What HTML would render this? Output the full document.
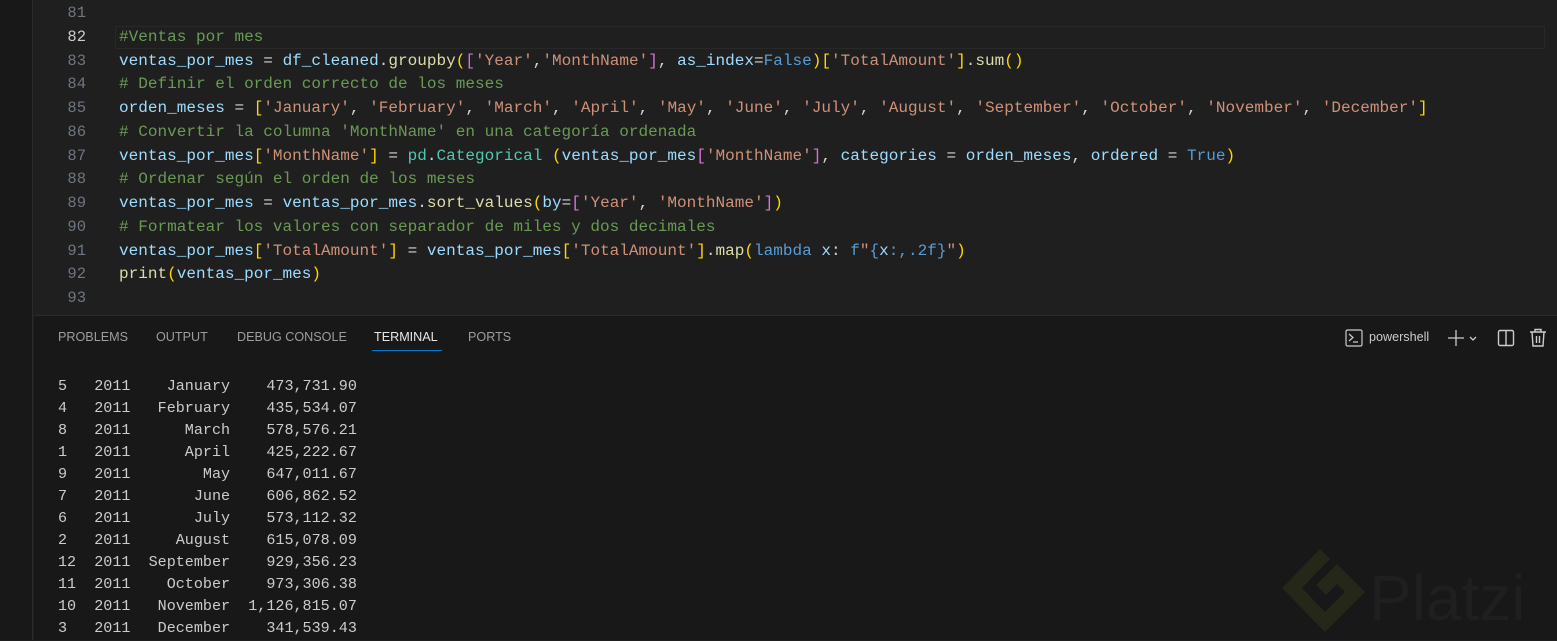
<!DOCTYPE html>
<html><head><meta charset="utf-8"><style>
*{margin:0;padding:0;box-sizing:border-box}
body{width:1557px;height:640px;overflow:hidden;background:#1f1f1f;position:relative;font-family:"Liberation Mono",monospace}
#side{position:absolute;left:0;top:0;width:33px;height:640px;background:#181818;border-right:1px solid #2b2b2b}
#ed{position:absolute;left:34px;top:0;right:0;height:315px;background:#1f1f1f}
.ln{position:absolute;left:0;width:52px;text-align:right;color:#6e7681;font-size:15.5px;height:24px;line-height:24px}
.cl{position:absolute;left:119px;font-size:16.05px;white-space:pre;color:#d4d4d4;height:24px;line-height:24px}
.v{color:#9cdcfe}.s{color:#ce9178}.c{color:#6a9955}.f{color:#dcdcaa}.y{color:#ffd700}.p{color:#da70d6}.b{color:#179fff}.k{color:#569cd6}.t{color:#4ec9b0}
#cur{position:absolute;left:81px;top:26px;width:1430px;height:23px;border:1px solid #282828}
#panel{position:absolute;left:34px;top:315px;right:0;bottom:0;background:#181818;border-top:1px solid #2b2b2b}
.tab{position:absolute;top:14px;font-family:"Liberation Sans",sans-serif;font-size:12.6px;color:#9d9d9d}
.tr{position:absolute;left:24px;font-size:15.1px;white-space:pre;color:#cccccc;line-height:22px}
</style></head><body>
<div id="side"></div>
<div id="ed">
<div id="cur"></div>
<div class="ln" style="top:1px">81</div>
<div class="ln" style="top:25px;color:#cccccc">82</div>
<div class="ln" style="top:49px">83</div>
<div class="ln" style="top:72px">84</div>
<div class="ln" style="top:96px">85</div>
<div class="ln" style="top:120px">86</div>
<div class="ln" style="top:144px">87</div>
<div class="ln" style="top:167px">88</div>
<div class="ln" style="top:191px">89</div>
<div class="ln" style="top:215px">90</div>
<div class="ln" style="top:239px">91</div>
<div class="ln" style="top:262px">92</div>
<div class="ln" style="top:286px">93</div>
</div>
<div style="position:absolute;left:0;top:0">
<div class="cl" style="top:25px"><span class="c">#Ventas por mes</span></div>
<div class="cl" style="top:49px"><span class="v">ventas_por_mes</span> = <span class="v">df_cleaned</span>.<span class="f">groupby</span><span class="y">(</span><span class="p">[</span><span class="s">'Year'</span>,<span class="s">'MonthName'</span><span class="p">]</span>, <span class="v">as_index</span>=<span class="k">False</span><span class="y">)</span><span class="y">[</span><span class="s">'TotalAmount'</span><span class="y">]</span>.<span class="f">sum</span><span class="y">()</span></div>
<div class="cl" style="top:72px"><span class="c"># Definir el orden correcto de los meses</span></div>
<div class="cl" style="top:96px"><span class="v">orden_meses</span> = <span class="y">[</span><span class="s">'January'</span>, <span class="s">'February'</span>, <span class="s">'March'</span>, <span class="s">'April'</span>, <span class="s">'May'</span>, <span class="s">'June'</span>, <span class="s">'July'</span>, <span class="s">'August'</span>, <span class="s">'September'</span>, <span class="s">'October'</span>, <span class="s">'November'</span>, <span class="s">'December'</span><span class="y">]</span></div>
<div class="cl" style="top:120px"><span class="c"># Convertir la columna 'MonthName' en una categoría ordenada</span></div>
<div class="cl" style="top:144px"><span class="v">ventas_por_mes</span><span class="y">[</span><span class="s">'MonthName'</span><span class="y">]</span> = <span class="t">pd</span>.<span class="t">Categorical</span> <span class="y">(</span><span class="v">ventas_por_mes</span><span class="p">[</span><span class="s">'MonthName'</span><span class="p">]</span>, <span class="v">categories</span> = <span class="v">orden_meses</span>, <span class="v">ordered</span> = <span class="k">True</span><span class="y">)</span></div>
<div class="cl" style="top:167px"><span class="c"># Ordenar según el orden de los meses</span></div>
<div class="cl" style="top:191px"><span class="v">ventas_por_mes</span> = <span class="v">ventas_por_mes</span>.<span class="f">sort_values</span><span class="y">(</span><span class="v">by</span>=<span class="p">[</span><span class="s">'Year'</span>, <span class="s">'MonthName'</span><span class="p">]</span><span class="y">)</span></div>
<div class="cl" style="top:215px"><span class="c"># Formatear los valores con separador de miles y dos decimales</span></div>
<div class="cl" style="top:239px"><span class="v">ventas_por_mes</span><span class="y">[</span><span class="s">'TotalAmount'</span><span class="y">]</span> = <span class="v">ventas_por_mes</span><span class="y">[</span><span class="s">'TotalAmount'</span><span class="y">]</span>.<span class="f">map</span><span class="y">(</span><span class="k">lambda</span> <span class="v">x</span>: <span class="k">f</span><span class="s">"</span><span class="k">{</span><span class="v">x</span><span class="k">:,.2f}</span><span class="s">"</span><span class="y">)</span></div>
<div class="cl" style="top:262px"><span class="f">print</span><span class="y">(</span><span class="v">ventas_por_mes</span><span class="y">)</span></div>
</div>
<div id="panel">
<div class="tab" style="left:24px">PROBLEMS</div>
<div class="tab" style="left:122px">OUTPUT</div>
<div class="tab" style="left:203px">DEBUG CONSOLE</div>
<div class="tab" style="left:340px;color:#e7e7e7">TERMINAL</div>
<div style="position:absolute;left:338px;top:34px;width:70px;height:1px;background:#0078d4"></div>
<div class="tab" style="left:434px">PORTS</div>
<svg style="position:absolute;left:1311px;top:13px" width="18" height="18" viewBox="0 0 18 18" fill="none" stroke="#ccc" stroke-width="1.2"><rect x="1" y="1" width="16" height="16" rx="1.5"/><path d="M4 5l4 3.5-4 3.5M8 13h5"/></svg>
<div class="tab" style="left:1335px;color:#ccc">powershell</div>
<svg style="position:absolute;left:1412px;top:12px" width="36" height="20" viewBox="0 0 36 20" fill="none" stroke="#ccc" stroke-width="1.3"><path d="M10 2v16M2 10h16"/><path d="M24 9l3 3 3-3"/></svg>
<svg style="position:absolute;left:1463px;top:13px" width="18" height="18" viewBox="0 0 18 18" fill="none" stroke="#ccc" stroke-width="1.4"><rect x="1.5" y="1.5" width="15" height="15" rx="1.5"/><path d="M9 1.5v15"/></svg>
<svg style="position:absolute;left:1495px;top:12px" width="18" height="20" viewBox="0 0 18 20" fill="none" stroke="#ccc" stroke-width="1.4"><path d="M1 4h16M6 4V1.5h6V4M3 4l1 14h10l1-14M7.5 8v7M10.5 8v7"/></svg>
<div class="tr" style="top:59px">5   2011    January    473,731.90
4   2011   February    435,534.07
8   2011      March    578,576.21
1   2011      April    425,222.67
9   2011        May    647,011.67
7   2011       June    606,862.52
6   2011       July    573,112.32
2   2011     August    615,078.09
12  2011  September    929,356.23
11  2011    October    973,306.38
10  2011   November  1,126,815.07
3   2011   December    341,539.43</div>
<svg style="position:absolute;left:1246px;top:230px" width="90" height="95" viewBox="0 0 90 95" fill="none" stroke="#252819" stroke-width="14"><path d="M45 8L12 42l33 34 30-30-18-18-16 16"/></svg>
<div style="position:absolute;left:1335px;top:245px;font-family:'Liberation Sans',sans-serif;font-size:64px;color:#1f1f1f">Platzi</div>
</div>
</body></html>
